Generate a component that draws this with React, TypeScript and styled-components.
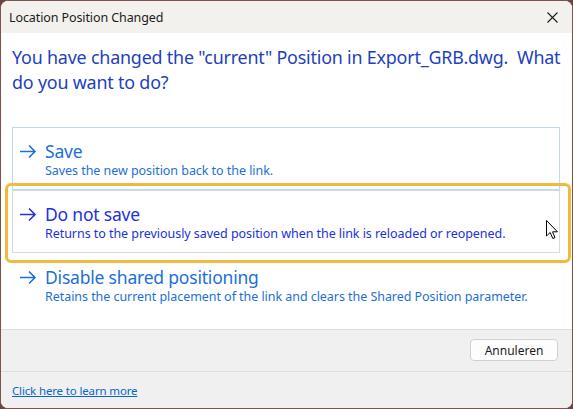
import React from "react";
import styled, { createGlobalStyle } from "styled-components";

const Global = createGlobalStyle`
  html, body { margin: 0; padding: 0; }
  body {
    background: #6b4442;
    font-family: "Noto Sans", "Open Sans", sans-serif;
    width: 573px;
    height: 409px;
    overflow: hidden;
  }
`;

const Window = styled.div`
  position: relative;
  box-sizing: border-box;
  width: 573px;
  height: 409px;
  border: 1px solid #7d514d;
  border-radius: 8px;
  overflow: hidden;
  background: #ffffff;
  display: flex;
  flex-direction: column;
`;

const TitleBar = styled.div`
  height: 32px;
  flex: none;
  background: #f3f1ee;
  display: flex;
  align-items: center;
  justify-content: space-between;
  padding: 0 14px 0 8px;
`;

const TitleText = styled.span`
  font-size: 12.5px;
  color: #1b1b1b;
  letter-spacing: -0.1px;
`;

const CloseButton = styled.button`
  border: 0;
  background: transparent;
  padding: 0;
  width: 12px;
  height: 12px;
  display: flex;
  align-items: center;
  justify-content: center;
`;

const Body = styled.div`
  flex: 1;
  padding: 12px 12px 0 11px;
  display: flex;
  flex-direction: column;
`;

const Heading = styled.div`
  font-size: 17.9px;
  line-height: 25px;
  color: #1e3fbe;
  letter-spacing: -0.2px;
  white-space: pre-wrap;
  margin-right: -12px;
`;

const CommandList = styled.div`
  margin-top: 32px;
  display: flex;
  flex-direction: column;
`;

const Command = styled.div<{ $state: "hover" | "focus" | "normal" }>`
  position: relative;
  display: grid;
  grid-template-columns: 26px 1fr;
  padding: 11px 0 10px 6px;
  border: 1px solid
    ${(p) =>
      p.$state === "hover" ? "#b9dbf6" : p.$state === "focus" ? "#dadada" : "transparent"};
  color: ${(p) => (p.$state === "focus" ? "#2131e0" : "#1c6fd8")};
`;

const Arrow = styled.svg`
  width: 18px;
  height: 24px;
  display: block;
`;

const CommandText = styled.div`
  display: flex;
  flex-direction: column;
`;

const CommandTitle = styled.span`
  font-size: 17.5px;
  line-height: 24px;
  letter-spacing: -0.2px;
`;

const CommandDesc = styled.span`
  font-size: 12.5px;
  line-height: 16px;
  letter-spacing: -0.05px;
`;

const Highlight = styled.div`
  position: absolute;
  top: -8px;
  left: -8px;
  right: -12px;
  bottom: -11px;
  border: 3.5px solid #f0bb3d;
  border-radius: 6px;
  pointer-events: none;
`;

const Cursor = styled.svg`
  position: absolute;
  left: 533px;
  top: 29px;
  width: 13px;
  height: 20px;
`;

const ButtonBar = styled.div`
  flex: none;
  height: 42px;
  box-sizing: border-box;
  border-top: 1px solid #dcdcdc;
  background: #f0f0f0;
  display: flex;
  align-items: center;
  justify-content: flex-end;
  padding: 0 14px 1px 0;
`;

const Button = styled.button`
  width: 88px;
  height: 22px;
  box-sizing: border-box;
  border: 1px solid #d0d0d0;
  border-radius: 4px;
  background: #fdfdfd;
  font-family: "Noto Sans", "Open Sans", sans-serif;
  font-size: 12px;
  color: #1b1b1b;
  padding: 0;
`;

const Footer = styled.div`
  flex: none;
  height: 37px;
  box-sizing: border-box;
  border-top: 1px solid #dedede;
  background: #f0f0f0;
  display: flex;
  align-items: center;
  padding: 0 0 0 11px;
`;

const Link = styled.a`
  font-size: 11.5px;
  color: #0a66cc;
  text-decoration: underline;
  letter-spacing: -0.15px;
`;

const ArrowIcon = () => (
  <Arrow viewBox="0 0 18 24">
    <path d="M1 12.5 H16 M10 6.5 L16 12.5 L10 18.5" fill="none" stroke="currentColor" strokeWidth="1.6" />
  </Arrow>
);

const commands: { title: string; desc: string; state: "hover" | "focus" | "normal" }[] = [
  { title: "Save", desc: "Saves the new position back to the link.", state: "hover" },
  {
    title: "Do not save",
    desc: "Returns to the previously saved position when the link is reloaded or reopened.",
    state: "focus",
  },
  {
    title: "Disable shared positioning",
    desc: "Retains the current placement of the link and clears the Shared Position parameter.",
    state: "normal",
  },
];

export default function App() {
  return (
    <>
      <Global />
      <Window>
        <TitleBar>
          <TitleText>Location Position Changed</TitleText>
          <CloseButton aria-label="Close">
            <svg width="11" height="11" viewBox="0 0 11 11">
              <path d="M0.5 0.5 L10.5 10.5 M10.5 0.5 L0.5 10.5" stroke="#1b1b1b" strokeWidth="1.1" />
            </svg>
          </CloseButton>
        </TitleBar>
        <Body>
          <Heading>
            {'You have changed the "current" Position in Export_GRB.dwg.  What do you want to do?'}
          </Heading>
          <CommandList>
            {commands.map((c) => (
              <Command key={c.title} $state={c.state}>
                <ArrowIcon />
                <CommandText>
                  <CommandTitle>{c.title}</CommandTitle>
                  <CommandDesc>{c.desc}</CommandDesc>
                </CommandText>
                {c.state === "focus" && (
                  <>
                    <Highlight />
                    <Cursor viewBox="0 0 13 20">
                      <path
                        d="M0.5 0.5 L0.5 16 L4.2 12.5 L6.8 18.5 L9 17.6 L6.5 11.8 L11.5 11.8 Z"
                        fill="#ffffff"
                        stroke="#000000"
                        strokeWidth="1"
                        strokeLinejoin="round"
                      />
                    </Cursor>
                  </>
                )}
              </Command>
            ))}
          </CommandList>
        </Body>
        <ButtonBar>
          <Button>Annuleren</Button>
        </ButtonBar>
        <Footer>
          <Link href="#">Click here to learn more</Link>
        </Footer>
      </Window>
    </>
  );
}
